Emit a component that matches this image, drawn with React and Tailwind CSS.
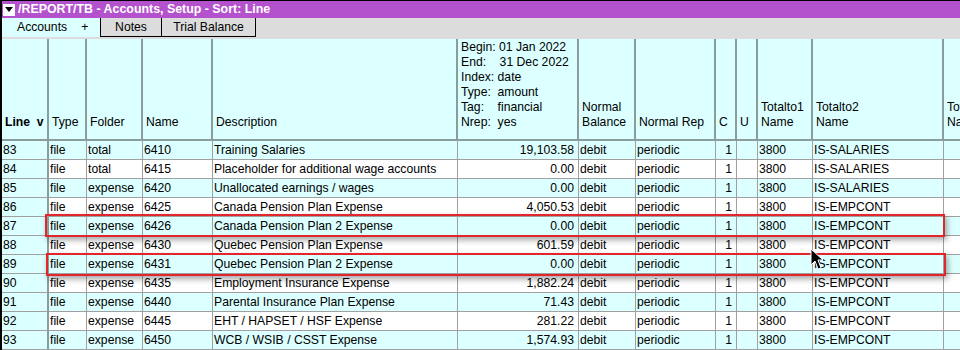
import React from 'react';

const cols = [
  { key: 'line', w: 'w-[47px]' },
  { key: 'type', w: 'w-[38px]' },
  { key: 'folder', w: 'w-[56px]' },
  { key: 'name', w: 'w-[70px]' },
  { key: 'desc', w: 'w-[245px]' },
  { key: 'amt', w: 'w-[121px]' },
  { key: 'nb', w: 'w-[57px]' },
  { key: 'nr', w: 'w-[80px]' },
  { key: 'c', w: 'w-[21px]' },
  { key: 'u', w: 'w-[21px]' },
  { key: 't1', w: 'w-[55px]' },
  { key: 't2', w: 'w-[131px]' },
  { key: 't3', w: 'w-[40px]' },
];

const rows = [
  ['83', 'file', 'total', '6410', 'Training Salaries', '19,103.58', 'IS-SALARIES'],
  ['84', 'file', 'total', '6415', 'Placeholder for additional wage accounts', '0.00', 'IS-SALARIES'],
  ['85', 'file', 'expense', '6420', 'Unallocated earnings / wages', '0.00', 'IS-SALARIES'],
  ['86', 'file', 'expense', '6425', 'Canada Pension Plan Expense', '4,050.53', 'IS-EMPCONT'],
  ['87', 'file', 'expense', '6426', 'Canada Pension Plan 2 Expense', '0.00', 'IS-EMPCONT'],
  ['88', 'file', 'expense', '6430', 'Quebec Pension Plan Expense', '601.59', 'IS-EMPCONT'],
  ['89', 'file', 'expense', '6431', 'Quebec Pension Plan 2 Expense', '0.00', 'IS-EMPCONT'],
  ['90', 'file', 'expense', '6435', 'Employment Insurance Expense', '1,882.24', 'IS-EMPCONT'],
  ['91', 'file', 'expense', '6440', 'Parental Insurance Plan Expense', '71.43', 'IS-EMPCONT'],
  ['92', 'file', 'expense', '6445', 'EHT / HAPSET / HSF Expense', '281.22', 'IS-EMPCONT'],
  ['93', 'file', 'expense', '6450', 'WCB / WSIB / CSST Expense', '1,574.93', 'IS-EMPCONT'],
];

function HeadCell({ w, children, bold }) {
  return (
    <div
      className={`${w} shrink-0 h-full flex flex-col justify-end px-[3px] pb-[9px] leading-[15px] border-r-2 border-[#8a9c9c] overflow-hidden ${
        bold ? 'font-bold' : ''
      }`}
    >
      {children}
    </div>
  );
}

function Cell({ w, children, right, rowHead }) {
  return (
    <div
      className={`${w} shrink-0 h-full flex items-center px-[1px] overflow-hidden whitespace-nowrap border-b border-[#a0a0a0] ${
        rowHead ? 'bg-[#dcffff] border-r-2 border-r-[#8a9c9c]' : 'border-r border-r-[#a0a0a0]'
      } ${right ? 'justify-end pr-[4px]' : ''}`}
    >
      {children}
    </div>
  );
}

function Highlight({ top, left }) {
  return (
    <div
      className="absolute h-[23px] w-[900px] border-2 border-[#e3262b] shadow-[2px_3px_6px_rgba(0,0,0,0.35)]"
      style={{ top, left }}
    />
  );
}

export default function App() {
  return (
    <div
      className="relative w-[960px] h-[350px] overflow-hidden bg-white border-l-2 border-black text-[12.2px] text-black"
      style={{ fontFamily: '"Liberation Sans", Arial, sans-serif' }}
    >
      {/* title bar */}
      <div className="h-[18px] bg-[#b452cd] border-t border-black flex items-center">
        <div className="w-[12px] h-[12px] ml-[1px] bg-white flex items-center justify-center">
          <svg width="8" height="5" viewBox="0 0 8 5">
            <path d="M0 0 H8 L4 5 Z" fill="#000" />
          </svg>
        </div>
        <span className="ml-[3px] text-white font-bold text-[12.4px] leading-none">
          /REPORT/TB - Accounts, Setup - Sort: Line
        </span>
      </div>

      {/* tabs */}
      <div className="h-[19px] bg-[#dcdcdc] flex items-stretch">
        <div className="w-[98px] bg-[#dcffff] flex items-center pl-[15px] gap-[14px]">
          <span>Accounts</span>
          <span>+</span>
        </div>
        <div className="w-[62px] border border-black border-t-0 flex items-center justify-center">Notes</div>
        <div className="w-[94px] border border-black border-t-0 border-l-0 flex items-center justify-center">
          Trial Balance
        </div>
      </div>

      {/* header */}
      <div className="h-[104px] bg-[#dcffff] flex border-t-2 border-b-2 border-[#dcdcdc] border-b-[#8a9c9c]">
        <HeadCell w={cols[0].w} bold>Line&nbsp; v</HeadCell>
        <HeadCell w={cols[1].w}>Type</HeadCell>
        <HeadCell w={cols[2].w}>Folder</HeadCell>
        <HeadCell w={cols[3].w}>Name</HeadCell>
        <HeadCell w={cols[4].w}>Description</HeadCell>
        <HeadCell w={cols[5].w}>
          <div>Begin: 01 Jan 2022</div>
          <div>End:&nbsp;&nbsp;&nbsp; 31 Dec 2022</div>
          <div>Index: date</div>
          <div>Type:&nbsp; amount</div>
          <div>Tag:&nbsp;&nbsp;&nbsp; financial</div>
          <div>Nrep:&nbsp; yes</div>
        </HeadCell>
        <HeadCell w={cols[6].w}>
          <div>Normal</div>
          <div>Balance</div>
        </HeadCell>
        <HeadCell w={cols[7].w}>Normal Rep</HeadCell>
        <HeadCell w={cols[8].w}>C</HeadCell>
        <HeadCell w={cols[9].w}>U</HeadCell>
        <HeadCell w={cols[10].w}>
          <div>Totalto1</div>
          <div>Name</div>
        </HeadCell>
        <HeadCell w={cols[11].w}>
          <div>Totalto2</div>
          <div>Name</div>
        </HeadCell>
        <HeadCell w={cols[12].w}>
          <div className="whitespace-nowrap">Totalto3</div>
          <div>Name</div>
        </HeadCell>
      </div>

      {/* rows */}
      {rows.map((r, i) => (
        <div key={r[0]} className={`h-[19px] flex ${i % 2 === 0 ? 'bg-[#dcffff]' : 'bg-white'}`}>
          <Cell w={cols[0].w} rowHead>{r[0]}</Cell>
          <Cell w={cols[1].w}>{r[1]}</Cell>
          <Cell w={cols[2].w}>{r[2]}</Cell>
          <Cell w={cols[3].w}>{r[3]}</Cell>
          <Cell w={cols[4].w}>{r[4]}</Cell>
          <Cell w={cols[5].w} right>{r[5]}</Cell>
          <Cell w={cols[6].w}>debit</Cell>
          <Cell w={cols[7].w}>periodic</Cell>
          <Cell w={cols[8].w} right>1</Cell>
          <Cell w={cols[9].w}></Cell>
          <Cell w={cols[10].w}>3800</Cell>
          <Cell w={cols[11].w}>{r[6]}</Cell>
          <Cell w={cols[12].w}></Cell>
        </div>
      ))}

      <Highlight top={214} left={43} />
      <Highlight top={253} left={44} />

      {/* mouse cursor */}
      <svg className="absolute left-[808px] top-[248px]" width="14" height="24" viewBox="0 0 14 24">
        <path d="M1 1 L1 17 L5 13 L8 21 L11 20 L8 12 L13 12 Z" fill="#000" stroke="#fff" strokeWidth="1" />
      </svg>
    </div>
  );
}
